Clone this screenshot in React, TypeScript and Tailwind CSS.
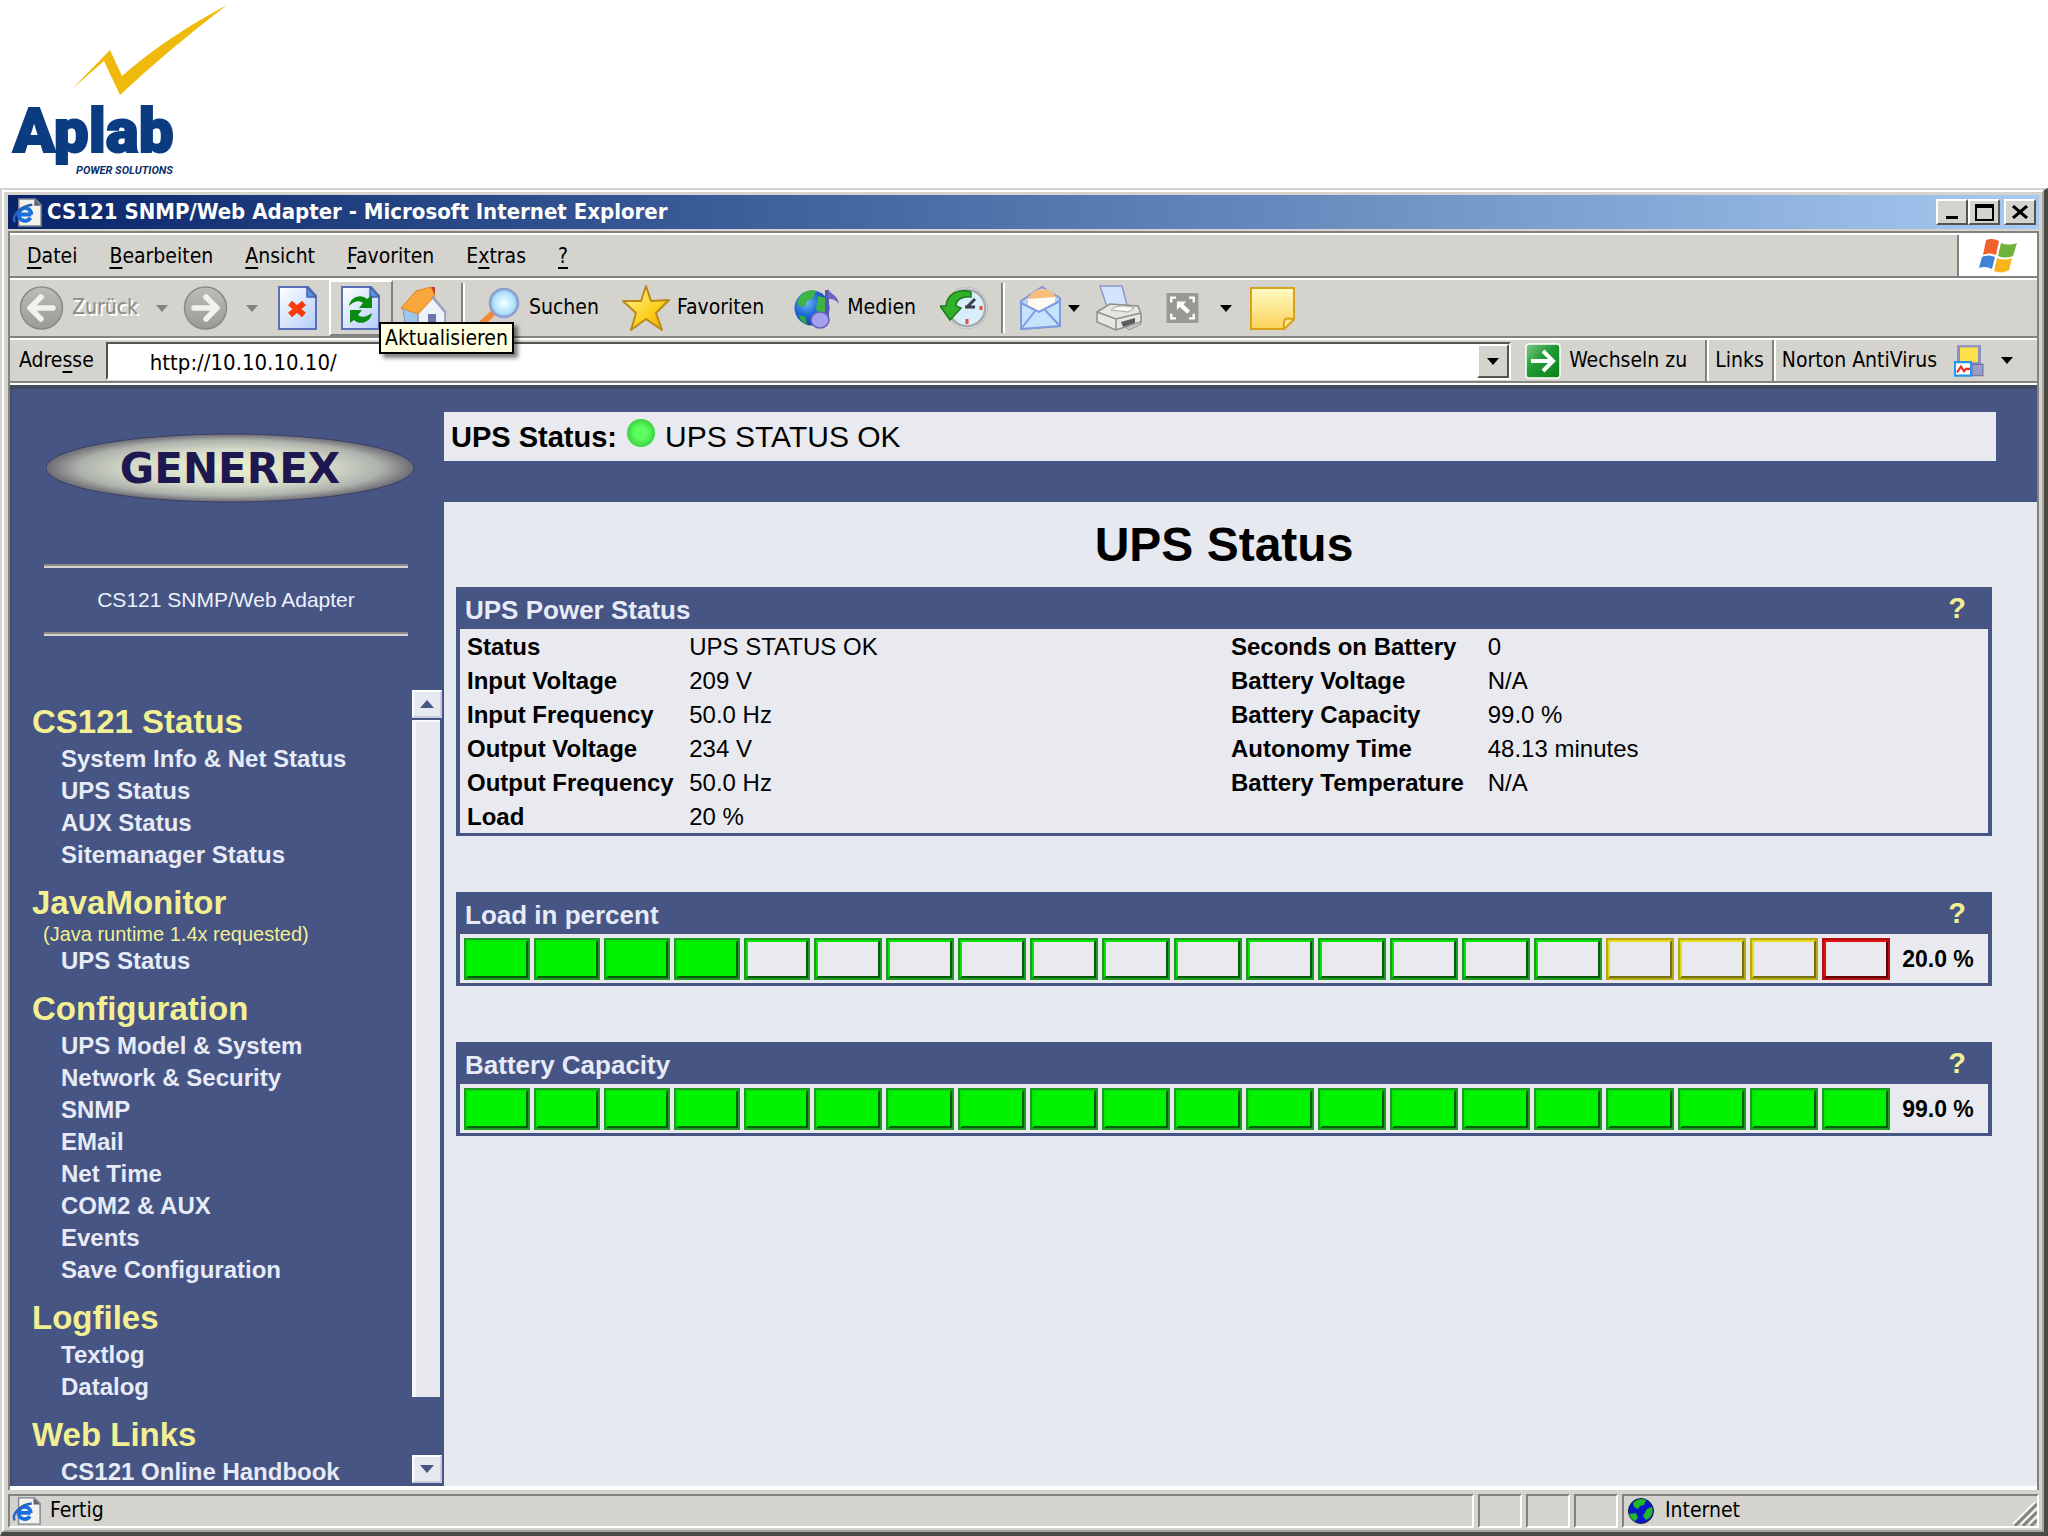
import React from "react";

const UI = "font-['DejaVu_Sans_Condensed','DejaVu_Sans',sans-serif]";
const ARIAL = "font-['Liberation_Sans',Arial,sans-serif]";

/* ---------- icons ---------- */

function AplabLogo() {
  return (
    <svg width="240" height="188" viewBox="0 0 240 188" role="img" aria-label="Aplab Power Solutions">
      <path
        d="M72 89 L110 50 L122 76 Q165 38 227 5 Q168 50 120 95 L104 61 Z"
        fill="#efba0b"
      />
      <text
        x="13"
        y="152"
        fontFamily="Roboto,'Liberation Sans',sans-serif"
        fontWeight="900"
        fontSize="62"
        fill="#0b3b80"
        stroke="#0b3b80"
        strokeWidth="2"
      >
        Aplab
      </text>
      <text
        x="76"
        y="174"
        fontFamily="Roboto,'Liberation Sans',sans-serif"
        fontWeight="700"
        fontStyle="italic"
        fontSize="11"
        fill="#0b2f6b"
      >
        POWER SOLUTIONS
      </text>
    </svg>
  );
}

function GenerexLogo() {
  return (
    <svg width="370" height="72" viewBox="0 0 370 72" role="img" aria-label="Generex">
      <defs>
        <radialGradient id="gx">
          <stop offset="0" stopColor="#eef2cf" />
          <stop offset="0.55" stopColor="#d3d8c8" />
          <stop offset="0.82" stopColor="#aeb2ac" />
          <stop offset="1" stopColor="#6b6a72" />
        </radialGradient>
      </defs>
      <ellipse cx="184" cy="36" rx="184" ry="34" fill="url(#gx)" stroke="#3a3f66" strokeWidth="1" />
      <text
        x="184"
        y="51"
        textAnchor="middle"
        fontFamily="'DejaVu Sans',sans-serif"
        fontWeight="700"
        fontSize="42"
        fill="#1d1850"
      >
        GENEREX
      </text>
    </svg>
  );
}

function IePage({ size = 32 }: { size?: number }) {
  return (
    <svg width={size} height={size} viewBox="0 0 32 32" aria-hidden="true">
      <path d="M7 2h17l6 6v22H7z" fill="#f4f2ea" stroke="#7d8494" strokeWidth="1.5" />
      <path d="M23 2v7h7z" fill="#59606c" />
      <path d="M20 18H7a6.500 6.500 0 1 1 13 0M7 18a6.500 6.500 0 0 0 12 3.500" fill="none" stroke="#1a6fe0" strokeWidth="4" />
      <path d="M3 26C-1 20 9 9 21 8" fill="none" stroke="#2c62b8" strokeWidth="2.500" />
    </svg>
  );
}

function NavCircle({ flip }: { flip?: boolean }) {
  return (
    <svg width="45" height="44" viewBox="0 0 45 44" aria-hidden="true">
      <defs>
        <linearGradient id="navg" x1="0" y1="0" x2="0" y2="1">
          <stop offset="0" stopColor="#bdbcb8" />
          <stop offset="1" stopColor="#9b9a96" />
        </linearGradient>
      </defs>
      <circle cx="22.500" cy="22" r="21" fill="url(#navg)" stroke="#8a8985" strokeWidth="1.500" />
      <g
        transform={flip ? "translate(45 0) scale(-1 1)" : undefined}
        fill="none"
        stroke="#f2f1ee"
        strokeWidth="5.500"
        strokeLinecap="round"
        strokeLinejoin="round"
      >
        <path d="M22 11L11 22l11 11M12 22h22" />
      </g>
    </svg>
  );
}

function Caret({ color = "#000" }: { color?: string }) {
  return (
    <svg width="12" height="7" viewBox="0 0 12 7" aria-hidden="true">
      <path d="M0 0h12L6 7z" fill={color} />
    </svg>
  );
}

function PageShape() {
  return (
    <>
      <defs>
        <linearGradient id="pg" x1="0" y1="0" x2="1" y2="1">
          <stop offset="0" stopColor="#ffffff" />
          <stop offset="1" stopColor="#b4cdfa" />
        </linearGradient>
      </defs>
      <path d="M1 1h29l8 9v33H1z" fill="url(#pg)" stroke="#5a6fb8" strokeWidth="2" />
      <path d="M29 1v10h9z" fill="#5b92dd" stroke="#4a63b0" strokeWidth="1.500" />
    </>
  );
}

function StopIcon() {
  return (
    <svg width="39" height="44" viewBox="0 0 39 44" aria-hidden="true">
      <PageShape />
      <path d="M12 17l14 12M26 17L12 29" stroke="#fb3a0c" strokeWidth="6" />
    </svg>
  );
}

function RefreshIcon() {
  return (
    <svg width="39" height="44" viewBox="0 0 39 44" aria-hidden="true">
      <PageShape />
      <g fill="#0b8a12">
        <path d="M8 20c1-9 12-13 18-7l5-4v13H18l4-5c-4-3-9-2-14 3z" />
        <path d="M31 27c-1 9-12 13-18 7l-4 3V24h12l-4 5c4 3 9 2 14-2z" />
      </g>
    </svg>
  );
}

function HomeIcon() {
  return (
    <svg width="46" height="46" viewBox="0 0 46 46" aria-hidden="true">
      <path d="M28 2h6v10h-6z" fill="#c43a2c" />
      <path d="M2 24l14-6 6 24-18-4z" fill="#9cc8ec" stroke="#7d9cc4" />
      <path d="M17 26L31 12l13 15v16H17z" fill="#eef3fb" stroke="#8d95bb" strokeWidth="1.500" />
      <path d="M0 23L15 6l15-4 4 9-17 18z" fill="#f9a63c" stroke="#df8222" strokeWidth="1" />
      <path d="M31 11l14 17" stroke="#9aa2c4" strokeWidth="2.500" />
      <path d="M27 29h8v14h-8z" fill="#6c78a8" />
    </svg>
  );
}

function SearchIcon() {
  return (
    <svg width="47" height="46" viewBox="0 0 47 46" aria-hidden="true">
      <defs>
        <radialGradient id="lens">
          <stop offset="0" stopColor="#f2ffff" />
          <stop offset="0.700" stopColor="#b5e4fb" />
          <stop offset="1" stopColor="#8fc4ee" />
        </radialGradient>
      </defs>
      <path d="M5 41l13-12" stroke="#ee8a35" strokeWidth="6" strokeLinecap="round" />
      <circle cx="30" cy="18" r="14" fill="url(#lens)" stroke="#8f9ccf" strokeWidth="2.500" />
    </svg>
  );
}

function StarIcon() {
  return (
    <svg width="48" height="46" viewBox="0 0 48 46" aria-hidden="true">
      <defs>
        <linearGradient id="star" x1="0" y1="0" x2="1" y2="1">
          <stop offset="0" stopColor="#fff7a0" />
          <stop offset="0.600" stopColor="#fbcf1c" />
          <stop offset="1" stopColor="#f0a400" />
        </linearGradient>
      </defs>
      <path
        d="M24 1l5 15 18-1-13 13 6 17-16-11-15 11 5-17L1 16l18 0z"
        fill="url(#star)"
        stroke="#b9871a"
        strokeWidth="2"
        strokeLinejoin="round"
      />
    </svg>
  );
}

function MediaIcon() {
  return (
    <svg width="46" height="44" viewBox="0 0 46 44" aria-hidden="true">
      <defs>
        <radialGradient id="earth" cx="0.35" cy="0.35" r="0.7">
          <stop offset="0" stopColor="#6fb4f6" />
          <stop offset="0.5" stopColor="#1f6ad8" />
          <stop offset="1" stopColor="#123c9a" />
        </radialGradient>
      </defs>
      <circle cx="18" cy="22" r="17.500" fill="url(#earth)" />
      <path d="M8 8c4-4 12-5 14-2l-3 6-6 3-2 6-7-2c-1-4 1-8 4-11zM24 10l8 2v16l-6 3-4-8z" fill="#3db544" />
      <path d="M5 29l6 2 2 7c-4-1-7-4-8-9z" fill="#35ab3b" />
      <path d="M33 4v29" stroke="#5a54b4" strokeWidth="4" />
      <path d="M34 3c2 5 10 6 11 15-4-5-7-5-11-5z" fill="#6a64c4" />
      <ellipse cx="26" cy="34" rx="9" ry="8" fill="#a4a2ee" stroke="#6660bd" strokeWidth="1.500" />
    </svg>
  );
}

function HistoryIcon() {
  return (
    <svg width="48" height="44" viewBox="0 0 48 44" aria-hidden="true">
      <circle cx="27" cy="22" r="19" fill="#d9eefb" stroke="#a7a8ac" strokeWidth="4" />
      <circle cx="27" cy="22" r="20" fill="none" stroke="#e6e6e6" strokeWidth="1" />
      <path d="M26 22l9-9M25 21h10" stroke="#3c4148" strokeWidth="3" />
      <path d="M41 20v4M27 33v5" stroke="#e0523c" strokeWidth="3" />
      <path d="M31 6C16 2 7 9 6 20H0l10 14 11-12-5-2c0-7 7-10 15-9z" fill="#33b02a" stroke="#1b7a17" strokeWidth="1.500" />
    </svg>
  );
}

function MailIcon() {
  return (
    <svg width="41" height="46" viewBox="0 0 41 46" aria-hidden="true">
      <path d="M1 16L22 2l18 11v28L1 44z" fill="#b7d4f8" stroke="#8b95d6" strokeWidth="2" />
      <path d="M8 14c5-12 24-13 27-2v13l-15 5L8 24z" fill="#fdfaf2" />
      <path d="M8 14c5-12 24-13 27-2z" fill="#f6bd7d" />
      <path d="M1 18l18 9 21-11v25L1 44z" fill="#c4e4fd" stroke="#7f9ade" strokeWidth="2" />
      <path d="M1 44l14-18M40 41L25 25" stroke="#7f9ade" strokeWidth="2" />
    </svg>
  );
}

function PrinterIcon() {
  return (
    <svg width="46" height="48" viewBox="0 0 46 48" aria-hidden="true">
      <path d="M4 2h22l5 19-20 2z" fill="#d4e4fd" stroke="#8d96cf" strokeWidth="1.500" />
      <path d="M1 28l13-8 28 2 3 8v8L20 46 1 38z" fill="#e6e6e2" stroke="#8f8f8c" strokeWidth="1.500" />
      <path d="M1 28l19 7 25-6M20 35v11" fill="none" stroke="#8f8f8c" strokeWidth="1.500" />
      <path d="M15 26c4-5 16-5 23-2l-6 4z" fill="#fafaf7" stroke="#a5a5a1" />
      <path d="M25 38l14-4v5l-12 4z" fill="#5c5c5c" />
      <path d="M30 43l14-5 1 2-12 6z" fill="#c9c9c4" stroke="#8f8f8c" />
    </svg>
  );
}

function ResizeIcon() {
  return (
    <svg width="33" height="30" viewBox="0 0 34 32" aria-hidden="true">
      <path d="M0 0h34v32H0z" fill="#999894" />
      <path d="M5 10V5h5M24 5h5v5M29 22v5h-5M10 27H5v-5" fill="none" stroke="#fff" strokeWidth="2.500" />
      <path d="M11 9h10l-3 3 7 7-3 3-8-7-3 3z" fill="#fff" />
    </svg>
  );
}

function NoteIcon() {
  return (
    <svg width="45" height="43" viewBox="0 0 46 44" aria-hidden="true">
      <defs>
        <linearGradient id="note" x1="0" y1="0" x2="0" y2="1">
          <stop offset="0" stopColor="#fffbc4" />
          <stop offset="1" stopColor="#fbd35a" />
        </linearGradient>
      </defs>
      <path d="M1 1h44v32L35 43H1z" fill="url(#note)" stroke="#d9a21c" strokeWidth="2" />
      <path d="M45 33c-5-1-8-1-9 0s-2 5-1 10z" fill="#fce897" stroke="#d9a21c" strokeWidth="2" />
    </svg>
  );
}

function WindowsFlag() {
  return (
    <svg width="40" height="36" viewBox="0 0 40 34" aria-hidden="true">
      <path d="M8 1c5-2 9-1 13 1l-3 14c-4-2-8-2-13 0z" fill="#f0602a" />
      <path d="M23 4c5 2 10 2 16 0l-4 13c-5 2-10 2-15 0z" fill="#6fb33a" />
      <path d="M4 18c5-2 9-2 13 0l-3 12c-4-2-8-3-13-1z" fill="#3f83d8" />
      <path d="M19 19c5 2 10 2 15 0l-3 12c-5 3-10 3-15 1z" fill="#f6b51d" />
    </svg>
  );
}

function GoIcon() {
  return (
    <svg width="36" height="36" viewBox="0 0 36 36" aria-hidden="true">
      <defs>
        <linearGradient id="go" x1="0" y1="0" x2="1" y2="1">
          <stop offset="0" stopColor="#7fc98a" />
          <stop offset="0.450" stopColor="#1f9b33" />
          <stop offset="1" stopColor="#078314" />
        </linearGradient>
      </defs>
      <rect x="1" y="1" width="34" height="34" rx="3" fill="url(#go)" stroke="#fff" strokeWidth="1.500" />
      <path d="M6 18h22M18 8l10 10-10 10" fill="none" stroke="#fff" strokeWidth="4" />
    </svg>
  );
}

function NortonIcon() {
  return (
    <svg width="30" height="34" viewBox="0 0 30 30" preserveAspectRatio="none" aria-hidden="true">
      <path d="M3 1h24v18H3z" fill="#8f8fc2" />
      <path d="M6 3h18v13H6z" fill="#fde04a" />
      <path d="M18 18h11v10H18z" fill="#9c9cc8" stroke="#6d6da0" />
      <path d="M1 16h16v12H1z" fill="#fff" stroke="#2795ea" strokeWidth="2" />
      <path d="M3 25l4-5 3 4 2-2h4" fill="none" stroke="#ea2a1a" strokeWidth="2" />
    </svg>
  );
}

function Globe() {
  return (
    <svg width="26" height="26" viewBox="0 0 26 26" aria-hidden="true">
      <circle cx="13" cy="13" r="12.500" fill="#0a18c8" stroke="#122038" />
      <path d="M5 5c4-4 9-5 13-3l-2 5-4 1-2 3-4-2zM24 9c2 6-1 11-6 13l-3-4 4-7zM1 16l7-1 2 5-3 3c-3-1-5-4-6-7z" fill="#23b52a" />
    </svg>
  );
}

/* ---------- window chrome ---------- */

const raised =
  "border-2 border-t-white border-l-white border-r-[#55544f] border-b-[#55544f] bg-[#d5d3cd]";
const sunken = "border-2 border-t-[#83827e] border-l-[#83827e] border-r-white border-b-white";

function TitleBar() {
  return (
    <header className="flex h-[34px] items-center bg-linear-to-r from-[#0a246a] to-[#a6caf0] pr-[3px] pl-1">
      <IePage size={31} />
      <h1 className="grow pl-1 text-[22px] leading-6 font-bold text-white">
        CS121 SNMP/Web Adapter - Microsoft Internet Explorer
      </h1>
      <button aria-label="Minimieren" className={`flex h-[26px] w-[32px] items-end justify-center pb-1 ${raised}`}>
        <span className="h-[3px] w-3 bg-black" />
      </button>
      <button aria-label="Maximieren" className={`flex h-[26px] w-[32px] items-center justify-center ${raised}`}>
        <span className="h-[17px] w-[19px] border-2 border-t-4 border-black" />
      </button>
      <button aria-label="Schließen" className={`ml-1 flex h-[26px] w-[32px] items-center justify-center ${raised}`}>
        <svg width="16" height="14" viewBox="0 0 16 14" aria-hidden="true">
          <path d="M1 1l14 12M15 1L1 13" stroke="#000" strokeWidth="3" />
        </svg>
      </button>
    </header>
  );
}

const menus: [string, string, string][] = [
  ["", "D", "atei"],
  ["", "B", "earbeiten"],
  ["", "A", "nsicht"],
  ["", "F", "avoriten"],
  ["E", "x", "tras"],
  ["", "?", ""],
];

function MenuBar() {
  return (
    <div className="flex h-[45px] border-t-2 border-b-2 border-t-white border-b-[#83827e]">
      <nav className="flex grow items-center gap-8 pl-[17px]">
        {menus.map(([a, key, b]) => (
          <button key={key} className="leading-7">
            {a}
            <span className="underline underline-offset-4">{key}</span>
            {b}
          </button>
        ))}
      </nav>
      <div className="flex w-[80px] items-center justify-center border-l-2 border-[#83827e] bg-white">
        <WindowsFlag />
      </div>
    </div>
  );
}

function Separator() {
  return <span className="h-[50px] w-[4px] border-r-2 border-l-2 border-l-[#83827e] border-r-white" />;
}

function ToolBar() {
  return (
    <div className="flex h-[60px] items-center border-t-2 border-b-2 border-t-white border-b-[#83827e] pl-[9px]">
      <button className="flex items-center gap-2 text-[#8b8a86] [text-shadow:2px_2px_0_#fff]">
        <NavCircle />
        Zurück
      </button>
      <button aria-label="Zurück-Verlauf" className="ml-[18px]">
        <Caret color="#83827e" />
      </button>
      <button aria-label="Vorwärts" className="ml-[15px]">
        <NavCircle flip />
      </button>
      <button aria-label="Vorwärts-Verlauf" className="ml-[18px]">
        <Caret color="#83827e" />
      </button>
      <button aria-label="Abbrechen" className="ml-5">
        <StopIcon />
      </button>
      <div className="relative ml-3">
        <button
          aria-label="Aktualisieren"
          className="flex h-[56px] w-[64px] items-center justify-center border-2 border-t-white border-r-[#83827e] border-b-[#83827e] border-l-white"
        >
          <RefreshIcon />
        </button>
        <div
          role="tooltip"
          className="absolute top-[42px] left-[50px] z-10 border-2 border-black bg-[#ffffe1] px-1 leading-7 whitespace-nowrap shadow-[4px_4px_4px_rgba(0,0,0,0.5)]"
        >
          Aktualisieren
        </div>
      </div>
      <button aria-label="Startseite" className="ml-2">
        <HomeIcon />
      </button>
      <span className="w-[14px]" />
      <Separator />
      <button className="ml-[9px] flex items-center gap-2">
        <SearchIcon />
        Suchen
      </button>
      <button className="ml-[23px] flex items-center gap-[7px]">
        <StarIcon />
        Favoriten
      </button>
      <button className="ml-[30px] flex items-center gap-[7px]">
        <MediaIcon />
        Medien
      </button>
      <button aria-label="Verlauf" className="ml-6">
        <HistoryIcon />
      </button>
      <span className="w-[13px]" />
      <Separator />
      <button aria-label="E-Mail" className="ml-[15px] flex items-center gap-[7px]">
        <MailIcon />
        <Caret />
      </button>
      <button aria-label="Drucken" className="ml-4">
        <PrinterIcon />
      </button>
      <button aria-label="Bearbeiten" className="ml-6 flex items-center gap-[21px]">
        <ResizeIcon />
        <Caret />
      </button>
      <button aria-label="Diskussion" className="ml-[18px]">
        <NoteIcon />
      </button>
    </div>
  );
}

function AddressBar() {
  return (
    <div className="flex h-[45px] border-t-2 border-b-2 border-t-white border-b-[#83827e]">
      <label htmlFor="address" className="self-center pl-[9px]">
        Adre<span className="underline underline-offset-4">s</span>se
      </label>
      <div className="mt-[2px] ml-3 flex h-[38px] grow border-2 border-t-[#55544f] border-r-white border-b-white border-l-[#55544f] bg-white">
        <input
          id="address"
          defaultValue="http://10.10.10.10/"
          className="min-w-0 grow bg-transparent pt-[2px] pl-[42px] text-[22px] outline-none"
        />
        <button aria-label="Adressliste öffnen" className={`flex w-[32px] items-center justify-center ${raised}`}>
          <Caret />
        </button>
      </div>
      <button className="ml-[14px] flex items-center gap-2 pr-[18px]">
        <GoIcon />
        Wechseln zu
      </button>
      <button className="border-r-2 border-l-2 border-[#83827e] px-2 shadow-[inset_2px_0_0_#fff]">Links</button>
      <button className="flex items-center gap-[17px] pr-6 pl-2 shadow-[inset_2px_0_0_#fff]">
        Norton AntiVirus
        <NortonIcon />
        <Caret />
      </button>
    </div>
  );
}

function StatusBar() {
  return (
    <footer className="mt-1 flex h-[34px] gap-1">
      <div className={`flex grow items-center gap-2 pl-[2px] ${sunken}`}>
        <IePage size={30} />
        Fertig
      </div>
      <div className={`w-[44px] ${sunken}`} />
      <div className={`w-[44px] ${sunken}`} />
      <div className={`w-[44px] ${sunken}`} />
      <div className={`flex w-[417px] items-center gap-[11px] pl-1 ${sunken}`}>
        <Globe />
        <span className="grow">Internet</span>
        <svg width="24" height="24" viewBox="0 0 24 24" aria-hidden="true" className="self-end">
          <path d="M2 24L24 2M10 24L24 10M18 24l6-6" stroke="#83827e" strokeWidth="3" />
          <path d="M0 22L22 0M8 22L24 6M16 22l8-8" stroke="#fff" strokeWidth="1.500" />
        </svg>
      </div>
    </footer>
  );
}

/* ---------- page content ---------- */

const sections: { title: string; note?: string; items: string[] }[] = [
  { title: "CS121 Status", items: ["System Info & Net Status", "UPS Status", "AUX Status", "Sitemanager Status"] },
  { title: "JavaMonitor", note: "(Java runtime 1.4x requested)", items: ["UPS Status"] },
  {
    title: "Configuration",
    items: [
      "UPS Model & System",
      "Network & Security",
      "SNMP",
      "EMail",
      "Net Time",
      "COM2 & AUX",
      "Events",
      "Save Configuration",
    ],
  },
  { title: "Logfiles", items: ["Textlog", "Datalog"] },
  { title: "Web Links", items: ["CS121 Online Handbook"] },
];

const scrollButton =
  "flex h-[28px] w-[30px] items-center justify-center border-2 border-t-white border-l-white border-r-[#c9cbdc] border-b-[#c9cbdc] bg-[#e7e9f0]";

function Sidebar() {
  return (
    <aside className="flex w-[432px] shrink-0 flex-col">
      <div className="flex h-[299px] flex-col pt-[43px] pr-9 pl-8">
        <div className="ml-[2px] h-[132px]">
          <GenerexLogo />
        </div>
        <div className="border-t-2 border-b-2 border-t-[#8b8a86] border-b-[#d5d3cd]" />
        <p className="h-[64px] text-center text-[21px] leading-[64px] text-[#eef1fb]">CS121 SNMP/Web Adapter</p>
        <div className="border-t-2 border-b-2 border-t-[#8b8a86] border-b-[#d5d3cd]" />
      </div>
      <div className="flex h-0 grow overflow-hidden">
        <nav className="flex grow flex-col gap-[11px] pt-[13px] pl-5">
          {sections.map((s) => (
            <section key={s.title}>
              <h2 className="text-[33px] leading-[42px] font-bold text-[#f3f094]">{s.title}</h2>
              {s.note && <p className="pl-[11px] text-[20px] leading-[21px] text-[#f3f094]">{s.note}</p>}
              <ul className="pl-[29px]">
                {s.items.map((item) => (
                  <li key={item} className="text-[24px] leading-8 font-bold text-[#e7ebf7]">
                    <a href="#">{item}</a>
                  </li>
                ))}
              </ul>
            </section>
          ))}
        </nav>
        <div className="mr-[2px] flex w-[30px] flex-col pt-[2px] pb-[3px]">
          <button aria-label="Nach oben" className={scrollButton}>
            <svg width="14" height="8" viewBox="0 0 14 8" aria-hidden="true">
              <path d="M0 8h14L7 0z" fill="#465584" />
            </svg>
          </button>
          <div className="mt-[2px] mr-[2px] mb-[58px] grow border-t-2 border-l-4 border-[#f6f7fe] bg-[#e7e9ee]" />
          <button aria-label="Nach unten" className={scrollButton}>
            <svg width="14" height="8" viewBox="0 0 14 8" aria-hidden="true">
              <path d="M0 0h14L7 8z" fill="#465584" />
            </svg>
          </button>
        </div>
      </div>
    </aside>
  );
}

function Panel({ title, children }: { title: string; children: React.ReactNode }) {
  return (
    <section className="bg-[#465584]">
      <header className="flex h-[42px] items-center justify-between pr-[26px] pl-[9px]">
        <h3 className="pt-1 text-[26px] leading-8 font-bold text-[#e7ebf7]">{title}</h3>
        <a href="#" aria-label={`Hilfe: ${title}`} className="text-[29px] leading-8 font-bold text-[#f3f094]">
          ?
        </a>
      </header>
      <div className="mx-1 bg-[#e8eaf0]">{children}</div>
      <div className="h-[3px]" />
    </section>
  );
}

const rows: [string, string, string, string][] = [
  ["Status", "UPS STATUS OK", "Seconds on Battery", "0"],
  ["Input Voltage", "209 V", "Battery Voltage", "N/A"],
  ["Input Frequency", "50.0 Hz", "Battery Capacity", "99.0 %"],
  ["Output Voltage", "234 V", "Autonomy Time", "48.13 minutes"],
  ["Output Frequency", "50.0 Hz", "Battery Temperature", "N/A"],
  ["Load", "20 %", "", ""],
];

function StatusTable() {
  return (
    <table className="w-full table-fixed border-collapse text-left text-[24px] leading-8">
      <colgroup>
        <col className="w-[15%]" />
        <col className="w-[35%]" />
        <col className="w-[17%]" />
        <col />
      </colgroup>
      <tbody>
        {rows.map(([l1, v1, l2, v2]) => (
          <tr key={l1}>
            <th scope="row" className="pt-[2px] pl-[7px] font-bold whitespace-nowrap">{l1}</th>
            <td className="pt-[2px]">{v1}</td>
            {l2 ? (
              <th scope="row" className="pt-[2px] pl-[7px] font-bold whitespace-nowrap">{l2}</th>
            ) : (
              <td />
            )}
            <td className="pt-[2px] pl-1">{v2}</td>
          </tr>
        ))}
      </tbody>
    </table>
  );
}

const tones = {
  green: {
    outer: "border-[#1f9a22]",
    inner: "border-t-[#06e506] border-l-[#06e506] border-r-[#045c04] border-b-[#045c04]",
  },
  yellow: {
    outer: "border-[#b8aa16]",
    inner: "border-t-[#e6dc1c] border-l-[#e6dc1c] border-r-[#77700a] border-b-[#77700a]",
  },
  red: {
    outer: "border-[#b01010]",
    inner: "border-t-[#e01010] border-l-[#e01010] border-r-[#640404] border-b-[#640404]",
  },
};

function Gauge({ filled, value, zones }: { filled: number; value: string; zones?: boolean }) {
  return (
    <div className="flex items-center pt-1 pb-[3px] pl-1">
      <div className="flex grow gap-1">
        {Array.from({ length: 20 }, (_, i) => {
          const tone = zones && i === 19 ? tones.red : zones && i > 15 ? tones.yellow : tones.green;
          return (
            <div key={i} className={`h-[42px] border-2 ${i < 5 ? "flex-[33]" : "flex-[34]"} ${tone.outer}`}>
              <div className={`h-full border-2 ${tone.inner} ${i < filled ? "bg-[#00f400]" : "bg-[#e8eaf0]"}`} />
            </div>
          );
        })}
      </div>
      <span className="w-[98px] pr-[2px] text-center text-[23px] leading-8 font-bold">{value}</span>
    </div>
  );
}

function Content() {
  return (
    <div className="flex min-w-0 grow flex-col">
      <div className="h-[113px] pt-[23px] pr-[41px]">
        <div className="flex h-[49px] items-center bg-[#e9eaef] pl-[7px] leading-9 text-black">
          <strong className="text-[29px]">UPS Status:</strong>
          <span className="mx-[10px] mb-2 size-7 rounded-full bg-radial from-[#5dff5d] from-30% to-[#22b530]" />
          <span className="text-[30px]">UPS STATUS OK</span>
        </div>
      </div>
      <main className="grow bg-[#e7e9f1] pr-[45px] pl-3 text-black">
        <h2 className="text-center text-[48px] leading-[85px] font-bold">UPS Status</h2>
        <div className="flex flex-col gap-14">
          <Panel title="UPS Power Status">
            <StatusTable />
          </Panel>
          <Panel title="Load in percent">
            <Gauge filled={4} value="20.0 %" zones />
          </Panel>
          <Panel title="Battery Capacity">
            <Gauge filled={20} value="99.0 %" />
          </Panel>
        </div>
      </main>
    </div>
  );
}

export default function App() {
  return (
    <div className="flex min-h-screen flex-col bg-white">
      <div className="h-[188px]">
        <AplabLogo />
      </div>
      <div className="flex grow flex-col border-t-2 border-r-4 border-b-4 border-l-2 border-t-[#d5d3cd] border-r-[#4a4945] border-b-[#4a4945] border-l-[#d5d3cd]">
        <div
          className={`flex grow flex-col border-t-2 border-r-2 border-b-2 border-l-2 border-t-white border-r-[#a5a39e] border-b-[#a5a39e] border-l-white bg-[#d5d3cd] pt-[3px] pr-[3px] pb-[2px] pl-1 text-[21px] text-black ${UI}`}
        >
          <TitleBar />
          <div className="mt-[2px] flex grow flex-col border-t-2 border-r-2 border-l-2 border-[#83827e]">
            <MenuBar />
            <ToolBar />
            <AddressBar />
            <div className="flex grow flex-col border-t-2 border-b-4 border-white">
              <div
                className={`flex grow border-t-4 border-l-2 border-[#434b5c] bg-[#465584] ${ARIAL}`}
              >
                <Sidebar />
                <Content />
              </div>
            </div>
          </div>
          <StatusBar />
        </div>
      </div>
    </div>
  );
}
